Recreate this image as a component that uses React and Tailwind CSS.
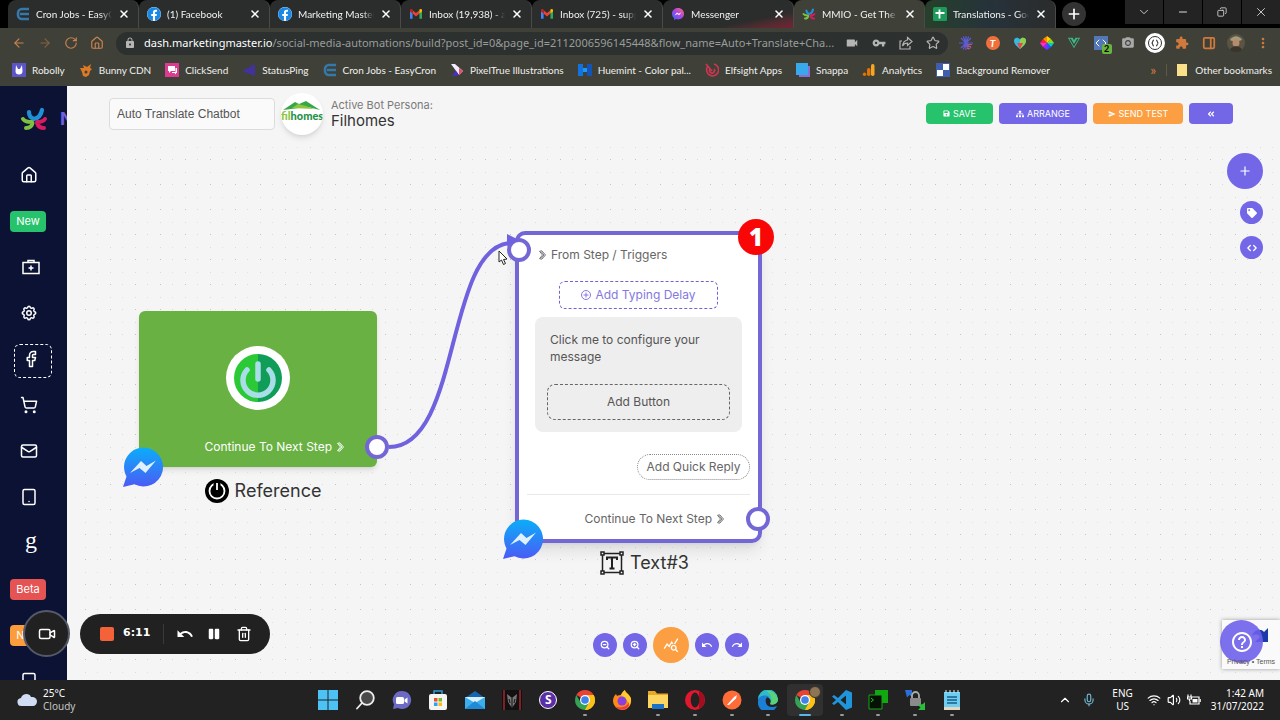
import React, { useState } from 'react';
import {
  ArrowLeft,
  ArrowRight,
  ChevronDown,
  ChevronUp,
  Code,
  Copy,
  Facebook,
  House,
  Mail,
  Mic,
  Minus,
  PanelRight,
  Plus,
  RotateCw,
  ShoppingCart,
  Star,
  Tablet,
  Trash2,
  Video,
  Volume2,
  Wifi,
  X,
  ZoomIn,
  ZoomOut
} from 'lucide-react';
import { FaAngleDoubleLeft, FaFacebook, FaPause, FaSave, FaSitemap, FaTag, FaVuejs } from 'react-icons/fa';
import {
  MdCameraAlt,
  MdExtension,
  MdHelpOutline,
  MdLock,
  MdMoreVert,
  MdQueryStats,
  MdRedo,
  MdSend,
  MdUndo,
  MdVideocam,
  MdVpnKey
} from 'react-icons/md';
import { TbSettings } from 'react-icons/tb';

/* ---------- Brand drawings ---------- */

function EasyCronIcon() {
  return (
    <svg viewBox="0 0 14 14" className="size-3.5 shrink-0" fill="none" stroke="#3579a8" strokeWidth="2.6">
      <path d="M13 2H6a4 4 0 0 0-4 4v2a4 4 0 0 0 4 4h7M4 7h9" />
    </svg>
  );
}

function FacebookIcon() {
  return (
    <span className="flex size-3.5 shrink-0 rounded-full bg-white">
      <FaFacebook className="size-3.5 text-[#1588e8]" />
    </span>
  );
}

function GmailIcon() {
  return (
    <svg viewBox="0 0 14 14" className="size-3.5 shrink-0">
      <path d="M1 3.5v8.3h2.6V6z" fill="#4285f4" />
      <path d="M13 3.5v8.3h-2.6V6z" fill="#34a853" />
      <path d="M3.6 3.2 7 6l3.4-2.8v3.4L7 9.4 3.6 6.6z" fill="#ea4335" />
      <path d="M1 3.3C1 2 2.6 1.7 3.6 2.6v4L1 4.6z" fill="#c5221f" />
      <path d="M13 3.3C13 2 11.4 1.7 10.4 2.6v4L13 4.6z" fill="#fbbc04" />
    </svg>
  );
}

function MessengerTabIcon() {
  return (
    <svg viewBox="0 0 14 14" className="size-3.5 shrink-0">
      <defs>
        <linearGradient id="msgTab" x1="0" y1="1" x2="1" y2="0">
          <stop offset="0" stopColor="#2a6cf6" />
          <stop offset="0.5" stopColor="#a845e8" />
          <stop offset="1" stopColor="#ff6a6a" />
        </linearGradient>
      </defs>
      <path d="M7 1c3.5 0 6 2.5 6 5.7s-2.5 5.7-6 5.7c-.7 0-1.3-.1-1.9-.3L3 13v-2C1.700 10 1 8.500 1 6.700 1 3.500 3.500 1 7 1z" fill="url(#msgTab)" />
      <path d="M3.5 8.5 6 5.500l1.700 1.300 2.800-1.600L8 8.300 6.300 7z" fill="#fff" />
    </svg>
  );
}

function StarLogo({ className }) {
  return (
    <svg viewBox="0 0 28 24" className={className} fill="none" strokeLinecap="round">
      <path d="M9 5c0 3 2 6 5 7M22 3c-1 5-3 8-8 9" stroke="#1f8fd6" strokeWidth="4.2" />
      <path d="M3 12c2 3 5 3 9 3M6 21c4 0 6-2 6.5-5" stroke="#7cc142" strokeWidth="4" />
      <path d="M25 12c-2 3-5 3-8 3M24 21c-4 0-6-2-7-5" stroke="#d81b60" strokeWidth="4" />
    </svg>
  );
}

function SheetsIcon() {
  return (
    <svg viewBox="0 0 14 14" className="size-3.5 shrink-0">
      <rect width="14" height="14" rx="1.5" fill="#1b9a59" />
      <path d="M6.5 2.5v9M2.5 6h9" stroke="#fff" strokeWidth="1.8" />
    </svg>
  );
}

function ChromeIcon() {
  return (
    <svg viewBox="0 0 20 20" className="size-5">
      <path d="M10 10 1.34 5A10 10 0 0 1 18.66 5z" fill="#e94335" />
      <path d="M10 10V5h8.66A10 10 0 0 1 10 20z" fill="#fbc116" />
      <path d="M1.34 5 5.67 12.5 10 15l-.1 5A10 10 0 0 1 1.34 5z" fill="#34a353" />
      <path d="M5.67 12.5 14.3 12.5 10 20z" fill="#34a353" />
      <path d="M10 5h8.66A10 10 0 0 1 10 20l4.33-7.5z" fill="#fbc116" />
      <circle cx="10" cy="10" r="5" fill="#fff" />
      <circle cx="10" cy="10" r="3.8" fill="#3f82ee" />
    </svg>
  );
}

function MessengerBadge({ id, className }) {
  return (
    <svg viewBox="0 0 40 40" className={className}>
      <defs>
        <linearGradient id={id} x1="0" y1="0" x2="0" y2="1">
          <stop offset="0" stopColor="#0aaef9" />
          <stop offset="1" stopColor="#4c5af5" />
        </linearGradient>
      </defs>
      <path d="M20.5 0.5a19.5 19.5 0 1 1-9 36.8L0 40l3.5-10.5A19.5 19.5 0 0 1 20.5 0.5z" fill={`url(#${id})`} />
      <path d="m7 26 11-12 5.5 5L33 13.5 22.5 26l-6-5z" fill="#dff1ff" />
    </svg>
  );
}

function DoubleChevron() {
  return (
    <svg viewBox="0 0 9 10" className="h-2.5 w-[9px] shrink-0" fill="none" stroke="currentColor" strokeWidth="0.9">
      <path d="M1.5 1.3 3.8.8 7.5 5 3.8 9.2 1.5 8.7 4.5 5zM3 1.5 6 5 3 8.5" />
    </svg>
  );
}

/* ---------- Browser ---------- */

const tabs = [
  { title: 'Cron Jobs - EasyC', icon: <EasyCronIcon /> },
  { title: '(1) Facebook', icon: <FacebookIcon /> },
  { title: 'Marketing Master', icon: <FacebookIcon /> },
  { title: 'Inbox (19,938) - a', icon: <GmailIcon /> },
  { title: 'Inbox (725) - supp', icon: <GmailIcon /> },
  { title: 'Messenger', icon: <MessengerTabIcon />, tint: 'bg-linear-to-br from-[#2b2c2c] from-70% to-[#7a1f34]' },
  { title: 'MMIO - Get The I', icon: <StarLogo className="size-3.5 shrink-0" />, tint: 'bg-[#3f4139]' },
  { title: 'Translations - Goo', icon: <SheetsIcon />, tint: 'bg-linear-to-r from-[#27402a] via-[#26323a] to-[#2b2c2c]' }
];

function TabStrip() {
  return (
    <div className="flex h-7 shrink-0 justify-between bg-black pl-2">
      <div className="flex">
        {tabs.map((tab, i) => (
          <div
            key={i}
            className={`flex w-[131px] items-center gap-1.5 rounded-t-lg border-r border-[#4a4a4a] px-2 ${tab.tint || 'bg-[#2b2c2c]'}`}
          >
            {tab.icon}
            <span className="min-w-0 flex-1 mask-r-from-85% text-[10px] whitespace-nowrap text-[#f0f0f0]">{tab.title}</span>
            <button aria-label={`Close ${tab.title}`} className="shrink-0">
              <X className="size-3 text-white" strokeWidth={3} />
            </button>
          </div>
        ))}
        <button aria-label="New tab" className="ml-1.5 flex size-6 items-center justify-center self-center rounded-full bg-[#333]">
          <Plus className="size-4 text-white" strokeWidth={2.5} />
        </button>
      </div>
      <div className="flex h-6 gap-px text-[#ddd]">
        <button aria-label="Search tabs" className="flex w-[38px] items-center justify-center bg-[#232323]">
          <ChevronDown className="size-3.5" strokeWidth={1.5} />
        </button>
        <button aria-label="Minimize" className="flex w-[38px] items-center justify-center bg-[#232323]">
          <Minus className="size-3" strokeWidth={2} />
        </button>
        <button aria-label="Restore" className="flex w-[38px] items-center justify-center bg-[#232323]">
          <Copy className="size-2.5 -scale-x-100" strokeWidth={2} />
        </button>
        <button aria-label="Close window" className="flex w-[38px] items-center justify-center bg-[#232323]">
          <X className="size-3.5" strokeWidth={1.5} />
        </button>
      </div>
    </div>
  );
}

const extensions = [
  <svg viewBox="0 0 14 14" className="size-3.5" stroke="#5b5bd6" strokeWidth="1.2">
    <path d="M7 0v14M0 7h14M2 2l10 10M12 2 2 12M4.3.5l5.4 13M9.7.5l-5.4 13" />
    <path d="M8 8.5h5M8 10.5h4M8 12.5h3" stroke="#c9525f" />
  </svg>,
  <span className="flex size-3.5 items-center justify-center rounded-full bg-[#f0703c] text-[10px] font-bold text-white italic">T</span>,
  <svg viewBox="0 0 14 14" className="size-3.5">
    <path d="M7 13C2 9 1 7 1 4.5 1 1.5 5 .5 7 3.5 9 .5 13 1.5 13 4.5 13 7 12 9 7 13z" fill="#37b8e0" />
    <path d="M7 13C10 10 13 8 13 4.5 13 1.5 9 .5 7 3.5z" fill="#8fd14f" />
    <path d="M4 7h6l-3 6z" fill="#e5484d" />
  </svg>,
  <svg viewBox="0 0 14 14" className="size-3.5">
    <path d="M7 7V0l4 3z" fill="#ffd400" />
    <path d="M7 7l4-4 3 4z" fill="#8de100" />
    <path d="M7 7h7l-3 4z" fill="#00c8e6" />
    <path d="M7 7l4 4-4 3z" fill="#2656ff" />
    <path d="M7 7v7l-4-3z" fill="#a01fff" />
    <path d="M7 7l-4 4-3-4z" fill="#ff2bd0" />
    <path d="M7 7H0l3-4z" fill="#ff1f3d" />
    <path d="M7 7 3 3l4-3z" fill="#ff8a00" />
  </svg>,
  <FaVuejs className="size-3.5 text-[#3fb883]" />,
  <span className="relative flex size-3.5 items-center justify-center bg-[#5378b8] text-white">
    <Code className="size-3" />
    <span className="absolute top-2 left-2 flex size-2.5 items-center justify-center rounded-xs bg-[#6ab43c] text-[9px] font-bold text-black">2</span>
  </span>,
  <MdCameraAlt className="size-3.5 text-[#a9a9a9]" />,
  <svg viewBox="0 0 20 20" className="size-5" fill="none" stroke="#333">
    <circle cx="10" cy="10" r="10" fill="#fff" stroke="none" />
    <circle cx="10" cy="10" r="6.5" />
    <path d="M9 7c-2 0-.5 3-2.500 3C8.500 10 7 13 9 13M11 7c2 0 .5 3 2.500 3-2 0-.5 3-2.500 3" strokeWidth="1.2" />
  </svg>,
  <MdExtension className="size-3.5 text-[#cf7a3c]" />,
  <PanelRight className="size-3.5 text-[#cf7a3c]" strokeWidth={3} />,
  <svg viewBox="0 0 18 18" className="size-[18px]">
    <circle cx="9" cy="9" r="9" fill="#5b5344" />
    <path d="M3 6c3-5 9-5 12 0l-3 1H5z" fill="#a59a7c" />
    <circle cx="9" cy="9" r="3.5" fill="#b98a6c" />
    <path d="M3 16c2-5 10-5 12 0-3 3-9 3-12 0z" fill="#39342c" />
  </svg>,
  <MdMoreVert className="size-4 text-[#cf7a3c]" />
];

function AddressBar() {
  return (
    <div className="flex h-[30px] shrink-0 items-center bg-[#3f4139] pr-1">
      <div className="flex items-center gap-3 pr-3 pl-3 text-[#c9824f]">
        <button aria-label="Back"><ArrowLeft className="size-3.5" /></button>
        <button aria-label="Forward"><ArrowRight className="size-3.5 text-[#84603f]" /></button>
        <button aria-label="Reload"><RotateCw className="size-3.5" /></button>
        <button aria-label="Home"><House className="size-3.5" /></button>
      </div>
      <div className="flex h-[23px] min-w-0 flex-1 items-center rounded-full bg-[#2c302f] px-2 text-[#b5b5b5]">
        <MdLock className="mr-2 size-3 shrink-0" />
        <p className="min-w-0 flex-1 font-['Noto_Sans',sans-serif] text-[11px] whitespace-nowrap text-[#9a9d9a]">
          <span className="text-white">dash.marketingmaster.io</span>
          /social-media-automations/build?post_id=0&amp;page_id=2112006596145448&amp;flow_name=Auto+Translate+Cha...
        </p>
        <div className="flex shrink-0 items-center gap-[13px] pl-2">
          <MdVideocam className="size-3.5" />
          <MdVpnKey className="size-3.5" />
          <svg viewBox="0 0 14 14" className="size-3.5" fill="none" stroke="currentColor" strokeWidth="1.2">
            <path d="M3 5H1v8h10v-3M8.5 1.5 13 5.5l-4.5 4V7C6 7 4.5 8 3.5 10 4 6.5 5.5 4.5 8.5 4z" />
          </svg>
          <Star className="size-3.5" />
        </div>
      </div>
      <div className="flex items-center pl-1">
        {extensions.map((icon, i) => (
          <button key={i} aria-label={`Extension ${i + 1}`} className="flex w-[27px] justify-center">{icon}</button>
        ))}
      </div>
    </div>
  );
}

const bookmarks = [
  {
    name: 'Robolly',
    icon: (
      <svg viewBox="0 0 14 14" className="size-3.5 shrink-0">
        <rect width="14" height="14" fill="#5b55c8" />
        <path d="M4 2l2 4h2l2-4 .5 6a3.500 3.500 0 1 1-7 0z" fill="#fff" />
      </svg>
    )
  },
  {
    name: 'Bunny CDN',
    icon: (
      <svg viewBox="0 0 14 14" className="size-3.5 shrink-0">
        <path d="M1 5l4 0-1-3 4 2 4-3-1 4 2 1-2 2-1 4-3 2-3-1-1-4z" fill="#dc7a26" />
        <circle cx="7" cy="9" r="1.5" fill="#3f4139" />
      </svg>
    )
  },
  {
    name: 'ClickSend',
    icon: (
      <svg viewBox="0 0 14 14" className="size-3.5 shrink-0">
        <rect width="14" height="14" fill="#dd3a92" />
        <path d="M3 3h7v5H6l-2 2V8H3z" fill="#fff" />
        <path d="M10.5 5H12v5h-1v1.500L9.500 10H7V9h3.500z" fill="#fff" />
      </svg>
    )
  },
  {
    name: 'StatusPing',
    icon: (
      <svg viewBox="0 0 14 14" className="size-3.5 shrink-0">
        <path d="M0 8 13 1v12z" fill="#41329c" />
      </svg>
    )
  },
  { name: 'Cron Jobs - EasyCron', icon: <EasyCronIcon /> },
  {
    name: 'PixelTrue Illustrations',
    icon: (
      <svg viewBox="0 0 14 14" className="size-3.5 shrink-0">
        <path d="M1 1h4l8 7-4 4z" fill="#f1ecff" />
        <path d="M9 5l4 3-4 4z" fill="#e94b6a" />
        <path d="M2 13l4-5 3 4z" fill="#4a2bd8" />
      </svg>
    )
  },
  {
    name: 'Huemint - Color pal...',
    icon: (
      <svg viewBox="0 0 14 14" className="size-3.5 shrink-0">
        <path d="M0 1h5v12H0z" fill="#1173e0" />
        <path d="M9 1h5v12H9z" fill="#1453b8" />
        <path d="M5 5h4v4H5z" fill="#1f97f4" />
      </svg>
    )
  },
  {
    name: 'Elfsight Apps',
    icon: (
      <svg viewBox="0 0 14 14" className="size-3.5 shrink-0" fill="none" stroke="#cf3550" strokeWidth="1.6">
        <path d="M3 3a6 6 0 1 0 6-2M1 1l6 7M5 6a2.500 2.500 0 1 0 4 0" />
      </svg>
    )
  },
  {
    name: 'Snappa',
    icon: (
      <svg viewBox="0 0 14 14" className="size-3.5 shrink-0">
        <path d="M3 3h11v11H3z" fill="#8b6fd0" />
        <path d="M0 0h12v12H0z" fill="#39a9ee" />
      </svg>
    )
  },
  {
    name: 'Analytics',
    icon: (
      <svg viewBox="0 0 14 14" className="size-3.5 shrink-0">
        <rect x="9" y="1" width="3.5" height="12" rx="1.7" fill="#f5a623" />
        <rect x="5" y="5" width="3.5" height="8" rx="1.7" fill="#e37400" />
        <circle cx="2.5" cy="11.3" r="1.7" fill="#e37400" />
      </svg>
    )
  },
  {
    name: 'Background Remover',
    icon: (
      <svg viewBox="0 0 14 14" className="size-3.5 shrink-0">
        <rect width="14" height="14" fill="#3f5fae" />
        <path d="M7 1h6v6H7zM1 7h6v6H1z" fill="#fff" />
      </svg>
    )
  }
];

function BookmarkBar() {
  return (
    <nav className="flex h-7 shrink-0 items-center justify-between bg-[#3f4139] pr-2 pb-1 pl-3 text-[10px] text-[#f0f0ee]">
      <div className="flex items-center gap-3.5">
        {bookmarks.map((b) => (
          <a key={b.name} href="#" className="flex items-center gap-1.5 whitespace-nowrap">
            {b.icon}
            {b.name}
          </a>
        ))}
      </div>
      <div className="flex items-center gap-2.5">
        <span className="text-sm leading-3 text-[#cf7a3c]">»</span>
        <span className="h-3 w-px bg-[#5d5a48]" />
        <a href="#" className="flex items-center gap-2 whitespace-nowrap">
          <span className="h-3 w-2.5 bg-[#fbe08a]" />
          Other bookmarks
        </a>
      </div>
    </nav>
  );
}

/* ---------- App sidebar ---------- */

function Sidebar() {
  const row = 'flex h-[46px] shrink-0 items-center';
  const badge = 'flex h-[21px] w-9 items-center justify-center rounded-sm text-[11px]';
  return (
    <aside className="flex w-[67px] shrink-0 flex-col overflow-hidden bg-[#0c1233] text-white">
      <div className="flex h-[66px] shrink-0 items-center gap-3 pl-5">
        <StarLogo className="h-6 w-7 shrink-0" />
        <span className="text-lg font-bold text-[#6c5fe0]">N</span>
      </div>
      <a href="#" aria-label="Home" className={`${row} pl-5`}><House className="size-[18px]" /></a>
      <a href="#" className={`${row} pl-2.5`}><span className={`${badge} bg-[#26c26c]`}>New</span></a>
      <a href="#" aria-label="Kit" className={`${row} pl-[22px]`}>
        <svg viewBox="0 0 18 16" className="h-4 w-[18px]" fill="none" stroke="currentColor" strokeWidth="1.5">
          <path d="M1 3.5h16v11H1zM6 3.5V1.5h6v2M9 6.5v5M6.5 9h5" />
        </svg>
      </a>
      <a href="#" aria-label="Settings" className={`${row} pl-5`}><TbSettings className="size-[18px]" /></a>
      <a href="#" aria-label="Facebook" className={`${row} pt-1 pl-3.5`}>
        <span className="flex h-[34px] w-[38px] items-center justify-center rounded-md border border-dashed border-white pr-1 pb-1">
          <Facebook className="size-[18px]" />
        </span>
      </a>
      <a href="#" aria-label="Shop" className={`${row} pl-5`}><ShoppingCart className="size-[18px]" /></a>
      <a href="#" aria-label="Mail" className={`${row} pl-5`}><Mail className="size-[18px]" /></a>
      <a href="#" aria-label="SMS" className={`${row} pl-5`}><Tablet className="size-[18px]" /></a>
      <a href="#" className={`${row} pb-1.5 pl-[25px] font-['Liberation_Serif',serif] text-2xl`}>g</a>
      <a href="#" className={`${row} pl-2.5`}><span className={`${badge} bg-[#e55353]`}>Beta</span></a>
      <a href="#" className={`${row} pl-2.5`}><span className={`${badge} bg-[#fb9d3c]`}>New</span></a>
      <a href="#" aria-label="Devices" className={`${row} pl-5`}><Tablet className="size-[18px]" /></a>
    </aside>
  );
}

/* ---------- Flow builder ---------- */

function BuilderHeader() {
  const [name, setName] = useState('Auto Translate Chatbot');
  const button = 'flex h-[21px] items-center justify-center gap-[3px] rounded-sm text-[9px] text-white';
  return (
    <header className="flex h-14 shrink-0 items-center justify-between pr-[47px] pb-px pl-[42px]">
      <div className="flex items-center gap-1.5">
        <input
          aria-label="Flow name"
          value={name}
          onChange={(e) => setName(e.target.value)}
          className="h-8 w-[166px] rounded-sm border border-[#dcdcdc] bg-[#fafafa] px-[7px] font-['Liberation_Sans',sans-serif] text-xs text-[#555]"
        />
        <svg viewBox="0 0 42 42" className="size-[42px] rounded-full bg-white shadow-md">
          <path d="M2 17 14 9l4 2 7-3 14 9-12-3-9 1z" fill="#35a845" />
          <path d="M11 15l6-4 8 2 8 3z" fill="#8cc63f" />
          <text x="0" y="27" fontFamily="Lato" fontSize="11" fontWeight="900" fill="#8cc63f">
            fil<tspan fill="#1f9347">homes</tspan>
          </text>
        </svg>
        <div className="pl-0.5">
          <p className="text-[11px] leading-[15px] text-[#7a7a7a]">Active Bot Persona:</p>
          <p className="text-[15px] leading-4 text-[#333]">Filhomes</p>
        </div>
      </div>
      <div className="flex gap-1.5">
        <button className={`${button} w-[67px] bg-[#26c26c]`}><FaSave className="size-[7px]" />SAVE</button>
        <button className={`${button} w-[88px] bg-[#7367e8]`}><FaSitemap className="size-2" />ARRANGE</button>
        <button className={`${button} w-[90px] bg-[#fb9f42]`}><MdSend className="size-2" />SEND TEST</button>
        <button aria-label="Collapse" className={`${button} w-11 bg-[#7367e8]`}><FaAngleDoubleLeft className="size-2" /></button>
      </div>
    </header>
  );
}

function Port({ className }) {
  return <span className={`absolute size-6 rounded-full border-4 border-[#7367d6] bg-white ${className}`} />;
}

function ReferenceNode() {
  return (
    <div className="absolute top-[169px] left-[60px] w-[238px]">
      <div className="relative flex h-[156px] flex-col items-center rounded-md bg-[#69b142] pt-[35px] shadow-md">
        <svg viewBox="0 0 64 64" className="size-16">
          <circle cx="32" cy="32" r="32" fill="#fff" />
          <path d="M32 8a24 24 0 0 0 0 48z" fill="#2bc936" />
          <path d="M32 8a24 24 0 0 1 0 48z" fill="#0f9d58" />
          <path d="M21 24a15 15 0 1 0 22 0" fill="none" stroke="#a9dde8" strokeWidth="5.5" strokeLinecap="round" />
          <path d="M32 18v15" stroke="#a9dde8" strokeWidth="5.5" strokeLinecap="round" />
        </svg>
        <p className="mt-[29px] flex w-full items-center justify-end gap-1 pr-8 text-xs text-white">
          Continue To Next Step
          <DoubleChevron />
        </p>
        <MessengerBadge id="msgRef" className="absolute -bottom-5 -left-4 size-10" />
        <Port className="-right-3 bottom-2" />
      </div>
      <div className="mt-3 flex items-center justify-center gap-1.5 pl-2.5 text-lg leading-6 text-[#333]">
        <svg viewBox="0 0 24 24" className="size-6">
          <circle cx="12" cy="12" r="12" fill="#000" />
          <circle cx="12" cy="12" r="7.5" fill="none" stroke="#fff" strokeWidth="1.8" />
          <path d="M8.5 2h7v7h-7z" fill="#000" />
          <circle cx="12" cy="12" r="4.5" fill="#000" />
          <path d="M12 4v7" stroke="#fff" strokeWidth="1.8" />
        </svg>
        Reference
      </div>
    </div>
  );
}

function TextNode() {
  return (
    <div className="absolute top-[89px] left-[436px] w-[247px]">
      <div className="relative h-[312px] rounded-[10px] border-4 border-[#7367d6] bg-white text-xs text-[#666] shadow-lg">
        <p className="flex h-10 items-center gap-1 pl-[19px]">
          <DoubleChevron />
          From Step / Triggers
        </p>
        <button className="mx-auto mt-1.5 flex h-7 w-[159px] items-center justify-center gap-1 rounded-md border border-dashed border-[#6f62d6] text-[#8578e0]">
          <svg viewBox="0 0 10 10" className="size-2.5" fill="none" stroke="currentColor">
            <circle cx="5" cy="5" r="4.5" />
            <path d="M5 2.5v5M2.5 5h5" />
          </svg>
          Add Typing Delay
        </button>
        <div className="mx-4 mt-2 h-[115px] rounded-lg bg-[#eee] px-3 pt-3.5">
          <p className="h-[53px] pl-[3px] leading-[17px] text-[#555]">Click me to configure your message</p>
          <button className="h-9 w-full rounded-lg border border-dashed border-[#666] text-[#555]">Add Button</button>
        </div>
        <button className="mt-[22px] mr-2 ml-auto flex h-[26px] w-[113px] items-center justify-center rounded-full border border-dotted border-[#888]">
          Add Quick Reply
        </button>
        <hr className="mx-2 mt-3.5 border-[#e8e8e8]" />
        <p className="flex h-12 items-center justify-end gap-1 pr-[33px]">
          Continue To Next Step
          <DoubleChevron />
        </p>
        <Port className="top-[3px] -left-3" />
        <Port className="-right-3 bottom-2" />
        <span className="absolute -top-4 -right-4 flex size-9 items-center justify-center rounded-full bg-[#f90606] font-['Open_Sans',sans-serif] text-2xl font-extrabold text-white">
          1
        </span>
        <MessengerBadge id="msgText" className="absolute -bottom-5 -left-4 size-10" />
      </div>
      <div className="mt-2 flex items-center justify-center gap-1.5 pl-3 text-lg leading-6 text-[#333]">
        <svg viewBox="0 0 24 24" className="size-6" fill="none" stroke="#222" strokeWidth="1.5">
          <path d="M2.5 4v16M21.5 4v16M4 2.5h16M4 21.5h16" />
          <path d="M1 1h3v3H1zM20 1h3v3h-3zM1 20h3v3H1zM20 20h3v3h-3z" fill="#fff" />
          <path d="M7 9V6.5h10V9M12 6.5v11M9.5 17.5h5" strokeWidth="2" />
        </svg>
        Text#3
      </div>
    </div>
  );
}

function Canvas() {
  const round = 'flex items-center justify-center rounded-full text-white';
  return (
    <div className="relative ml-3 min-h-0 flex-1 overflow-hidden">
      <svg className="absolute inset-0 size-full">
        <defs>
          <pattern id="dots" width="25" height="25" patternUnits="userSpaceOnUse">
            <rect x="6" y="17" width="1" height="1" fill="#c4c4c4" />
            <rect x="18" y="17" width="1" height="1" fill="#dadada" />
            <rect x="6" y="5" width="1" height="1" fill="#dadada" />
            <rect x="18" y="5" width="1" height="1" fill="#e2e2e2" />
          </pattern>
        </defs>
        <rect width="100%" height="100%" fill="url(#dots)" />
      </svg>

      <ReferenceNode />
      <TextNode />

      {/* Connection and pointer */}
      <svg viewBox="0 0 480 320" className="pointer-events-none absolute top-0 left-0 h-80 w-[480px]">
        <path d="M310 305C382 305 366 108 430 101" fill="none" stroke="#7062de" strokeWidth="4" />
        <path d="m428 92 12 6-12 6z" fill="#7062de" />
        <path d="M420 109v11l2.5-2 2 4.5 2-1-2-4 3.5-.5z" fill="#fff" stroke="#222" strokeWidth="1" />
      </svg>

      {/* Side actions */}
      <div className="absolute top-[11px] right-[17px] flex flex-col items-end gap-3">
        <button aria-label="Add" className={`${round} size-9 bg-[#7367e8]`}><Plus className="size-3.5" /></button>
        <button aria-label="Tags" className={`${round} size-[23px] bg-[#7367e8]`}><FaTag className="size-2.5" /></button>
        <button aria-label="Code" className={`${round} size-[23px] bg-[#7367e8]`}><Code className="size-2.5" strokeWidth={3} /></button>
      </div>

      {/* Zoom and history */}
      <div className="absolute inset-x-0 bottom-[17px] flex items-center justify-center gap-1.5 pr-[17px]">
        <button aria-label="Zoom out" className={`${round} size-6 bg-[#7367e8]`}><ZoomOut className="size-2.5" strokeWidth={3} /></button>
        <button aria-label="Zoom in" className={`${round} size-6 bg-[#7367e8]`}><ZoomIn className="size-2.5" strokeWidth={3} /></button>
        <button aria-label="Stats" className={`${round} size-9 bg-[#fb9f42]`}><MdQueryStats className="size-4" /></button>
        <button aria-label="Undo" className={`${round} size-6 bg-[#7367e8]`}><MdUndo className="size-3" /></button>
        <button aria-label="Redo" className={`${round} size-6 bg-[#7367e8]`}><MdRedo className="size-3" /></button>
      </div>

      {/* Captcha card with help bubble */}
      <div className="absolute right-0 bottom-[11px] flex h-[49px] w-[58px] items-end justify-center bg-[#fafafa] pb-0.5 shadow-[0_0_4px_#999]">
        <svg viewBox="0 0 16 16" className="absolute top-2 right-3 size-4"><path d="M16 0v14H3l5-5C6 6 3 6 0 8c2-7 9-8 12-4z" fill="#1c3aa9" /></svg>
        <button aria-label="Help" className="absolute top-0 -left-0.5 flex size-[43px] items-center justify-center rounded-full bg-[#6f60ea]/90 text-white">
          <MdHelpOutline className="size-6" />
        </button>
        <span className="relative font-['Liberation_Sans',sans-serif] text-[7px] text-[#555]">Privacy • Terms</span>
      </div>
    </div>
  );
}

function RecorderControls() {
  return (
    <div className="absolute bottom-[23px] left-[23px] flex items-center gap-2.5">
      <button aria-label="Camera" className="flex size-[47px] items-center justify-center rounded-full border-2 border-[#555a6b] bg-[#212121] text-white">
        <Video className="size-[18px]" />
      </button>
      <div className="flex h-10 w-[190px] items-center rounded-full bg-[#212121] pl-5 text-white">
        <button aria-label="Stop" className="size-3.5 rounded-xs bg-[#f4623a]" />
        <span className="w-[49px] pl-[9px] font-['DejaVu_Sans',sans-serif] text-[11px] font-bold">6:11</span>
        <span className="h-5 w-px bg-[#3a3a3a]" />
        <button aria-label="Restart" className="ml-3"><MdUndo className="size-[18px]" /></button>
        <button aria-label="Pause" className="ml-3.5"><FaPause className="size-3" /></button>
        <button aria-label="Delete" className="ml-4"><Trash2 className="size-4" /></button>
      </div>
    </div>
  );
}

/* ---------- Taskbar ---------- */

const apps = [
  {
    name: 'Start',
    icon: <svg viewBox="0 0 20 20" className="size-5"><path d="M0 0h9.5v9.5H0zM10.5 0H20v9.5h-9.5zM0 10.5h9.5V20H0zM10.5 10.5H20V20h-9.5z" fill="#4cc2f5" /></svg>
  },
  {
    name: 'Search',
    icon: (
      <svg viewBox="0 0 20 20" className="size-5" fill="#4a4a4a" stroke="#eee" strokeWidth="1.8">
        <circle cx="12" cy="8" r="6.8" />
        <path d="m7 13-5 5.5" strokeLinecap="round" />
      </svg>
    )
  },
  {
    name: 'Chat',
    icon: (
      <svg viewBox="0 0 20 20" className="size-5">
        <path d="M10 1a9 9 0 1 1-4 17l-5 1 1-4.500A9 9 0 0 1 10 1z" fill="#6c6ac4" />
        <rect x="4" y="7" width="8" height="7" rx="1.5" fill="#fff" />
        <path d="m12.5 9.5 3-2v6l-3-2z" fill="#fff" />
      </svg>
    )
  },
  {
    name: 'Store',
    icon: (
      <svg viewBox="0 0 20 20" className="size-5">
        <path d="M6 5V1h8v4" fill="none" stroke="#2d9fd8" strokeWidth="1.5" />
        <rect x="1" y="4" width="18" height="16" rx="2" fill="#f4f4f4" />
        <path d="M6 8h3.5v3.5H6z" fill="#e8502b" />
        <path d="M10.5 8H14v3.5h-3.5z" fill="#7dba22" />
        <path d="M6 12.5h3.5V16H6z" fill="#2aa3e8" />
        <path d="M10.5 12.5H14V16h-3.5z" fill="#fbb81a" />
      </svg>
    )
  },
  {
    name: 'Mail',
    icon: (
      <svg viewBox="0 0 20 20" className="size-5">
        <path d="M0 8 10 1l10 7z" fill="#1565b0" />
        <path d="M0 7h20v12H0z" fill="#3aaeee" />
        <path d="M0 7h20L10 13z" fill="#d9f0fd" />
        <path d="M0 19 10 11l10 8z" fill="#1f8ad6" />
      </svg>
    )
  },
  {
    name: 'Game',
    icon: (
      <svg viewBox="0 0 20 20" className="size-5">
        <rect width="20" height="20" fill="#111" />
        <path d="M2 0v20M18 0v20" stroke="#a8232b" strokeWidth="1.5" />
        <path d="M5 4l5 4 5-4-1 8-4 6-4-6z" fill="#777" />
        <path d="M10 8v10M7 9l1 4M13 9l-1 4" stroke="#111" />
      </svg>
    )
  },
  {
    name: 'Stacks',
    icon: (
      <span className="flex size-[18px] items-center justify-center rounded-full border border-white bg-[#5a2ea6] text-xs font-bold text-white">S</span>
    )
  },
  { name: 'Chrome', icon: <ChromeIcon />, running: true },
  {
    name: 'Firefox',
    icon: (
      <svg viewBox="0 0 20 20" className="size-5">
        <path d="M10 20A9 9 0 0 1 1 11c0-3 1-5 3-7l1 2c1-1 3-1 4-1 1-2 2-4 4-5 0 3 5 4 6 9 1 6-3 11-9 11z" fill="#ff8a16" />
        <path d="M13 0c0 3 5 4 6 9 0 3-1 5-2 7 0-6-5-7-8-11 1-2 2-4 4-5z" fill="#ffcb2e" />
        <path d="M3 16c3 4 9 5 13 1 1-2 1-3 1-5-2 5-9 7-14 4z" fill="#f0394f" />
        <circle cx="10" cy="11" r="4.5" fill="#8a3fe0" />
      </svg>
    )
  },
  {
    name: 'Explorer',
    icon: (
      <svg viewBox="0 0 20 20" className="size-5">
        <path d="M0 1h7l2 2.5h11V18H0z" fill="#e9a823" />
        <path d="M0 5h20v13H0z" fill="#fcd462" />
        <path d="M4 14h12v5H4z" fill="#1a73c8" />
      </svg>
    ),
    running: true
  },
  {
    name: 'Opera',
    icon: (
      <svg viewBox="0 0 20 20" className="size-5">
        <circle cx="10" cy="10" r="10" fill="#e3172d" />
        <path d="M14 1a10 10 0 0 1 0 18z" fill="#a30d1e" />
        <ellipse cx="10" cy="10" rx="4.3" ry="7.5" fill="#222" />
      </svg>
    ),
    running: true
  },
  {
    name: 'Postman',
    icon: (
      <svg viewBox="0 0 20 20" className="size-5">
        <circle cx="10" cy="10" r="9.5" fill="#ff6c37" />
        <path d="m5 15 7-8 3-2-1 3.5-7 6.5z" fill="#fff" />
      </svg>
    ),
    running: true
  },
  {
    name: 'Edge',
    icon: (
      <svg viewBox="0 0 20 20" className="size-5">
        <path d="M0 10A10 10 0 0 1 20 9c0 4-3 5.5-6 5.5-1.5 0-2-.5-1.5-1.5C14 9 9 5 4 6.5 2 7.200 1 8.500 0 10z" fill="#2fb9c9" />
        <path d="M8 1A10 10 0 0 1 20 9c0 4-3 5.5-6 5.5-1.5 0-2-.5-1.5-1.5C14 9 14 4 8 1z" fill="#5bd17a" />
        <path d="M0 10c1-4 7-6 11-3-3 0-4 3-3 6 1 4 6 5 11 3A10 10 0 0 1 0 10z" fill="#1b7fd6" />
      </svg>
    ),
    running: true
  },
  {
    name: 'Chrome profile',
    icon: (
      <span className="relative">
        <ChromeIcon />
        <span className="absolute -top-1 -right-1.5 size-3 rounded-full border border-[#3a3428] bg-[#8d7455]" />
      </span>
    ),
    active: true
  },
  {
    name: 'VS Code',
    icon: (
      <svg viewBox="0 0 20 20" className="size-5">
        <path d="M14 0 6 8 2 5 0 6.5 4 10l-4 3.5L2 15l4-3 8 8 6-2.5v-15zM14 5.500v9L8.500 10z" fill="#1f95dc" fillRule="evenodd" />
      </svg>
    ),
    running: true
  },
  {
    name: 'Terminal',
    icon: (
      <svg viewBox="0 0 20 20" className="size-5">
        <path d="M7 0h13v13H7z" fill="#12a812" />
        <path d="M1 5h13v14H1z" fill="#061006" stroke="#12a812" />
        <path d="m3 8 2.5 2L3 12" fill="none" stroke="#18d018" />
      </svg>
    ),
    running: true
  },
  {
    name: 'WinSCP',
    icon: (
      <svg viewBox="0 0 20 20" className="size-5">
        <path d="M0 0h7v7L4.5 5 2 7.5z" fill="#2d6fd8" />
        <path d="M7 9V5.5a3.5 3.5 0 0 1 7 0V9" fill="none" stroke="#aaa" strokeWidth="1.8" />
        <rect x="5" y="8" width="11" height="8" rx="1" fill="#8a8a8a" />
        <path d="M20 20h-7l2.5-2.5L13 15l5-1 2-2z" fill="#27c03b" />
      </svg>
    ),
    running: true
  },
  {
    name: 'Notepad',
    icon: (
      <svg viewBox="0 0 20 20" className="size-5">
        <path d="M2 2h16v18H2z" fill="#6fcdf0" />
        <path d="M2 17h16v3H2z" fill="#e8d7c0" />
        <path d="M5 7h10M5 10h10M5 13h10" stroke="#155f8a" strokeWidth="1.5" />
        <path d="M4 0v3M8 0v3M12 0v3M16 0v3" stroke="#d9f3fc" />
      </svg>
    ),
    running: true
  }
];

function Taskbar() {
  return (
    <footer className="grid h-10 shrink-0 grid-cols-[1fr_660px_1fr] bg-[#222] font-['Noto_Sans',sans-serif] text-[10px] leading-[13px] text-white">
      <div className="flex items-center gap-1.5 pl-[17px]">
        <svg viewBox="0 0 20 14" className="h-3.5 w-5">
          <path d="M5 13a4 4 0 0 1-1-8C5 1 12-1 14 4c4-.5 6 2 6 4.5S18 13 16 13z" fill="#cfdcf3" />
        </svg>
        <p>25°C<br /><span className="text-[#c4c4c4]">Cloudy</span></p>
      </div>
      <div className="flex">
        {apps.map((app) => (
          <button
            key={app.name}
            aria-label={app.name}
            className={`relative flex flex-1 items-center justify-center ${app.active ? 'my-1 rounded-sm bg-[#303030]' : ''}`}
          >
            {app.icon}
            {app.running && <span className="absolute bottom-1 h-0.5 w-1 rounded-full bg-[#9a9a9a]" />}
            {app.active && <span className="absolute bottom-0 h-0.5 w-3 rounded-full bg-[#56b7e8]" />}
          </button>
        ))}
      </div>
      <div className="flex items-center justify-end pr-4">
        <ChevronUp className="size-3.5" />
        <Mic className="ml-2.5 size-3.5 text-[#6fb6d0]" />
        <p className="ml-4 text-center">ENG<br />US</p>
        <div className="ml-3.5 flex items-center gap-1.5">
          <Wifi className="size-3.5" />
          <Volume2 className="size-3.5" />
          <svg viewBox="0 0 14 12" className="h-3 w-3.5" fill="none" stroke="currentColor" strokeWidth="1.2">
            <path d="M5 3h7v7H3V7" />
            <path d="M5.5 5h5v3.5h-5z" fill="currentColor" stroke="none" />
            <path d="M13.2 5v3M1 .5v2.5M4 .5v2.5M.5 3h4v2h-4zM2.5 5v2" />
          </svg>
        </div>
        <p className="ml-2.5 text-right">1:42 AM<br />31/07/2022</p>
      </div>
    </footer>
  );
}

function App() {
  return (
    <div className="flex h-screen flex-col overflow-hidden font-['Lato',sans-serif]">
      <TabStrip />
      <AddressBar />
      <BookmarkBar />
      <div className="relative flex min-h-0 flex-1 font-['Inter',sans-serif]">
        <Sidebar />
        <main className="flex min-w-0 flex-1 flex-col bg-[#f5f5f5]">
          <BuilderHeader />
          <Canvas />
        </main>
        <RecorderControls />
      </div>
      <Taskbar />
    </div>
  );
}

export default App;
